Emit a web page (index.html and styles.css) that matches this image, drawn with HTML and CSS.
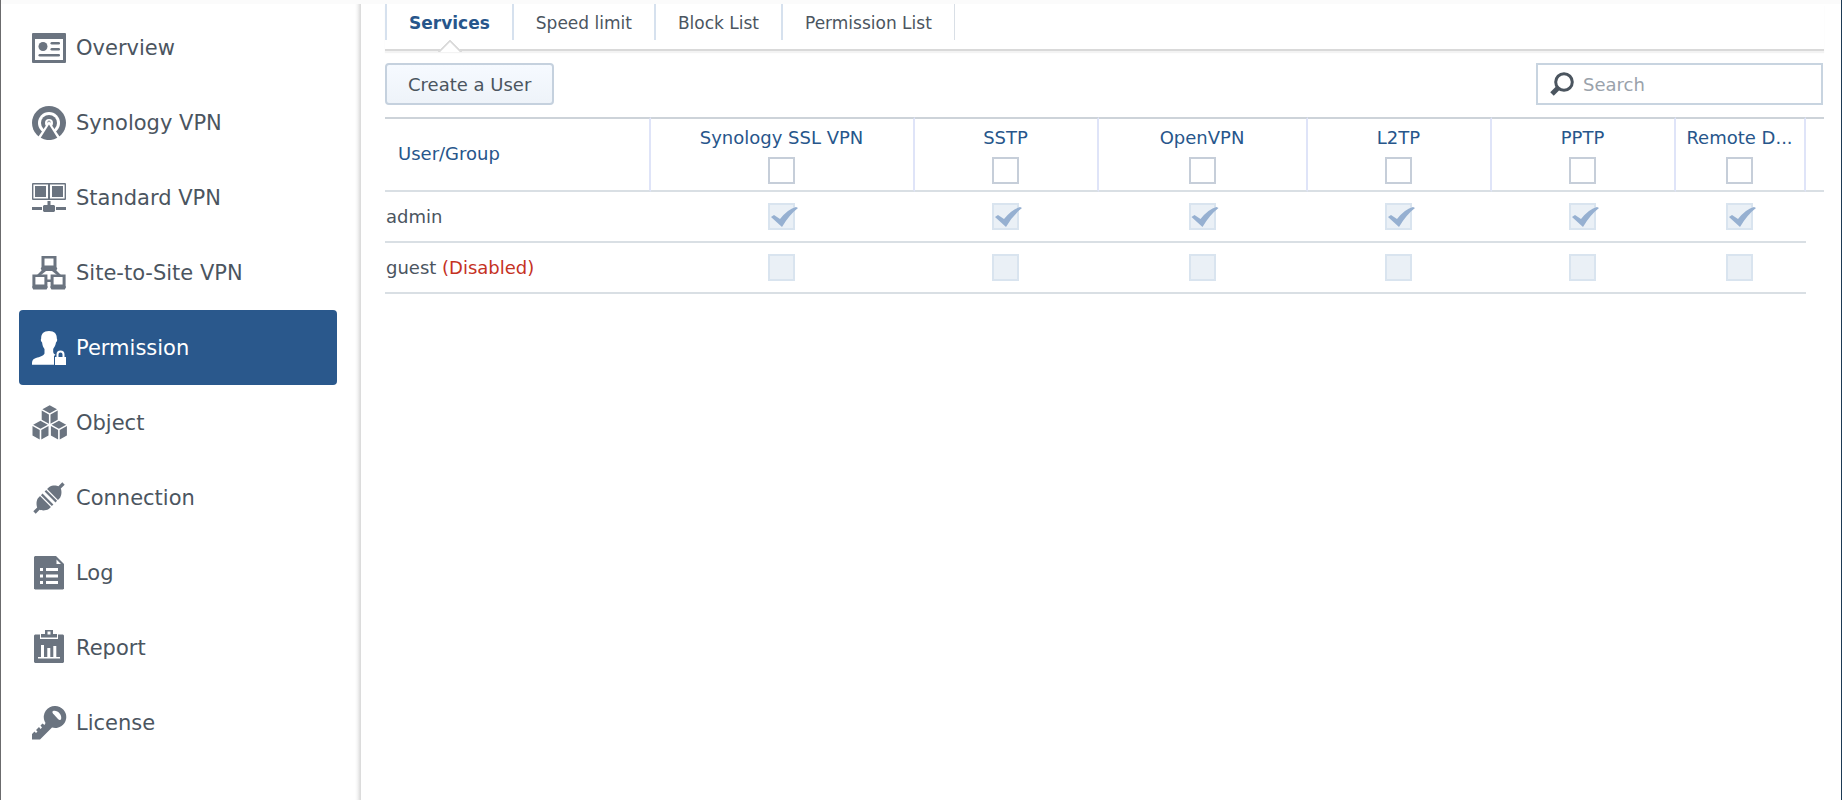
FILE: index.html
```html
<!DOCTYPE html>
<html lang="en">
<head>
  <meta charset="UTF-8">
  <title>VPN Plus Server</title>
  <link rel="stylesheet" href="styles.css">
</head>
<body>

  <nav class="sidebar">
    <a class="nav-item" href="#overview">
      <svg class="icon" viewBox="0 0 35 35">
        <path fill-rule="evenodd" d="M1 3h32a1 1 0 0 1 1 1v28a1 1 0 0 1-1 1H1a1 1 0 0 1-1-1V4a1 1 0 0 1 1-1zM3 9v21h28V9z"/>
        <circle cx="11" cy="16.500" r="4.500"/>
        <rect x="18.500" y="12" width="9.500" height="2.600" rx="1.300"/>
        <rect x="18.500" y="18" width="9.500" height="2.600" rx="1.300"/>
        <rect x="6.500" y="24" width="21.500" height="2.600" rx="1.300"/>
      </svg>
      <span>Overview</span>
    </a>
    <a class="nav-item" href="#synology-vpn">
      <svg class="icon" viewBox="0 0 35 35">
        <circle cx="17" cy="18" r="17"/>
        <circle class="cut" cx="17" cy="18" r="11"/>
        <circle cx="17" cy="18" r="8"/>
        <circle class="cut" cx="17" cy="18" r="4"/>
        <circle cx="17" cy="17" r="1.500"/>
        <path class="cut" d="M17 16 5.500 33l3 2h17l3-2z"/>
        <path d="M17 19.500 8.700 32.800a17 17 0 0 0 16.600 0z"/>
      </svg>
      <span>Synology VPN</span>
    </a>
    <a class="nav-item" href="#standard-vpn">
      <svg class="icon" viewBox="0 0 35 35">
        <path fill-rule="evenodd" d="M1 3h32a1 1 0 0 1 1 1v15a1 1 0 0 1-1 1H1a1 1 0 0 1-1-1V4a1 1 0 0 1 1-1zm.4 1.400v14.200h14.600V4.400zm16.600 0v14.200h14.600V4.400z"/>
        <path d="M3 6h11v11H3zM20 6h11v11H20z"/>
        <path d="M15.500 21h3v4H22l1 1v5l-1 1H12l-1-1v-5l1-1h3.500zM0 27h10v3H0zM24 27h10v3H24z"/>
      </svg>
      <span>Standard VPN</span>
    </a>
    <a class="nav-item" href="#site-to-site">
      <svg class="icon" viewBox="0 0 35 35">
        <path d="M11 14 5 20h4l5-4h6l5 4h4l-6-6zM14 24.500h6v2.500h-6z"/>
        <path fill-rule="evenodd" d="M9.500 1h15v11l.8 1.500-1.300 2.500H10l-1.300-2.500.8-1.500zM12.500 3.500v7h9v-7z"/>
        <path fill-rule="evenodd" d="M.4 19.500h15V31l.5 1-1.300 2.500H1.200L0 32l.4-1zM3.400 22v7.500h9V22z"/>
        <path fill-rule="evenodd" d="M18.600 19.500h15V31l.5 1-1.300 2.500H19.400L18.100 32l.5-1zM21.600 22v7.500h9V22z"/>
      </svg>
      <span>Site-to-Site VPN</span>
    </a>
    <a class="nav-item active" href="#permission">
      <svg class="icon" viewBox="0 0 35 35">
        <path d="M17 1c5.500 0 8 3 7.800 7.500.7.800.5 3-.8 4-.5 3.500-2 5-2.800 6.500v3c.3 1.500 1 2 2.300 2.800L22 26v8.700H0c0-4 .6-5.700 4-6.700 4-1.300 7-1.600 8.500-4.500v-4.500c-1.200-1.500-2-3-2.400-6.500-1.300-1-1.600-3.200-.9-4C9 4 11.500 1 17 1z"/>
        <path fill-rule="evenodd" d="M23 27h1.500v-2.500a4 4 0 0 1 8 0V27H34v8H23zm3.500 0h4v-2.500a2 2 0 0 0-4 0z"/>
      </svg>
      <span>Permission</span>
    </a>
    <a class="nav-item" href="#object">
      <svg class="icon" viewBox="0 0 35 35">
        <g id="cube">
          <path d="M17.700.2 25 4.200l-7.300 4-7.300-4z"/>
          <path d="M9.700 5.400l7.200 4v9.400l-7.200-4zM25.700 5.400l-7.200 4v9.400l7.200-4z"/>
        </g>
        <use href="#cube" x="-9.200" y="15.600"/>
        <use href="#cube" x="9.200" y="15.600"/>
      </svg>
      <span>Object</span>
    </a>
    <a class="nav-item" href="#connection">
      <svg class="icon" viewBox="0 0 35 35">
        <g transform="rotate(45 17 18)">
          <path d="M15.300-2.500h3.400V3c1.500.6 5 3 6 7v3H9.300v-3c1-4 4.500-6.400 6-7z"/>
          <path d="M9.300 14.300h15.400v2.200H9.300zM9.300 19.500h15.400v2.200H9.300z"/>
          <path d="M15.300 38.500h3.400V33c1.500-.6 5-3 6-7v-3H9.300v3c1 4 4.500 6.400 6 7z"/>
        </g>
      </svg>
      <span>Connection</span>
    </a>
    <a class="nav-item" href="#log">
      <svg class="icon" viewBox="0 0 35 35">
        <path d="M3 1h21l8 8v24.500l-1 1H3l-1-1V2z"/>
        <path class="cut" d="M24.500 4.500V9H29zM8 13h3v3H8zM14 13h12v3H14zM8 19.500h3v3H8zM14 19.500h12v3H14zM8 26h3v3H8zM14 26h12v3H14z"/>
      </svg>
      <span>Log</span>
    </a>
    <a class="nav-item" href="#report">
      <svg class="icon" viewBox="0 0 35 35">
        <path d="M2 5.500l1-1h5V9h18V4.500h5l1 1V32l-1 1H3l-1-1z"/>
        <path fill-rule="evenodd" d="M13 0h8v4h4v3.500H9V4h4zm2.500 1.500v3h3v-3z"/>
        <path class="cut" d="M6 27h3V15h3v12h3.300v-9h3v9h3v-11h3v11H28v1.500H6z"/>
      </svg>
      <span>Report</span>
    </a>
    <a class="nav-item" href="#license">
      <svg class="icon" viewBox="0 0 35 35">
        <path d="M23 1a11 11 0 1 1-3 21.500L8 34.500H0V29l2.500-2.500 1.500 1.500 1.500-1.500L4 25l3-3 1.500 2 1.500-1.500-1.500-2 2-2 2 1.500L13.500 18 12.500 16A11 11 0 0 1 23 1z"/>
        <path class="cut" d="M21 6c4-1.500 9.500 3.500 8 8.500-1 .8-2 .5-3-.5l-5-5.500c-.8-1-.8-2 0-2.500z"/>
      </svg>
      <span>License</span>
    </a>
  </nav>

  <main class="content">
    <div class="tabs">
      <a class="tab active" href="#services">Services</a>
      <a class="tab" href="#speed-limit">Speed limit</a>
      <a class="tab" href="#block-list">Block List</a>
      <a class="tab" href="#permission-list">Permission List</a>
    </div>

    <div class="toolbar">
      <button class="btn" type="button">Create a User</button>
      <label class="search">
        <svg class="search-icon" viewBox="0 0 24 24">
          <circle cx="14" cy="10" r="8.300"/>
          <path d="M8 16l-6 6"/>
        </svg>
        <input type="text" placeholder="Search" aria-label="Search">
      </label>
    </div>

    <table class="grid">
      <colgroup>
        <col>
        <col class="col-ssl">
        <col class="col-service">
        <col class="col-openvpn">
        <col class="col-service">
        <col class="col-service">
        <col class="col-remote">
        <col class="col-scroll">
      </colgroup>
      <thead>
        <tr>
          <th class="name">User/Group</th>
          <th><label>Synology SSL VPN<input type="checkbox"></label></th>
          <th><label>SSTP<input type="checkbox"></label></th>
          <th><label>OpenVPN<input type="checkbox"></label></th>
          <th><label>L2TP<input type="checkbox"></label></th>
          <th><label>PPTP<input type="checkbox"></label></th>
          <th><label>Remote D...<input type="checkbox"></label></th>
          <th></th>
        </tr>
      </thead>
      <tbody>
        <tr>
          <td class="name">admin</td>
          <td><input type="checkbox" aria-label="admin Synology SSL VPN" checked disabled></td>
          <td><input type="checkbox" aria-label="admin SSTP" checked disabled></td>
          <td><input type="checkbox" aria-label="admin OpenVPN" checked disabled></td>
          <td><input type="checkbox" aria-label="admin L2TP" checked disabled></td>
          <td><input type="checkbox" aria-label="admin PPTP" checked disabled></td>
          <td><input type="checkbox" aria-label="admin Remote Desktop" checked disabled></td>
        </tr>
        <tr>
          <td class="name">guest <span class="disabled">(Disabled)</span></td>
          <td><input type="checkbox" aria-label="guest Synology SSL VPN" disabled></td>
          <td><input type="checkbox" aria-label="guest SSTP" disabled></td>
          <td><input type="checkbox" aria-label="guest OpenVPN" disabled></td>
          <td><input type="checkbox" aria-label="guest L2TP" disabled></td>
          <td><input type="checkbox" aria-label="guest PPTP" disabled></td>
          <td><input type="checkbox" aria-label="guest Remote Desktop" disabled></td>
        </tr>
      </tbody>
    </table>
  </main>

</body>
</html>
```
FILE: styles.css
```css
* {
  box-sizing: border-box;
}

body {
  display: flex;
  min-height: 100vh;
  margin: 0;
  border-left: 1px solid #6b6b6d;
  border-right: 1px solid #1d3a55;
  background: linear-gradient(#fbfbfb 4px, #fff 4px);
  font-family: Verdana, "DejaVu Sans", sans-serif;
  font-size: 18px;
  color: #4b555f;
}

a {
  color: inherit;
  text-decoration: none;
}

/* sidebar */
.sidebar {
  flex: none;
  width: 360px;
  margin-top: 4px;
  padding: 6px 24px 0 18px;
  background: linear-gradient(to left, #dcdcdc 1px, #e8e8e8 2px, #f7f7f7 4px, #fff 6px);
}

.nav-item {
  display: flex;
  align-items: center;
  gap: 9px;
  height: 75px;
  padding-left: 13px;
  border-radius: 4px;
  font-size: 21px;
}

.nav-item.active {
  background: #2a588c;
  color: #fff;
}

.icon {
  width: 35px;
  height: 35px;
  fill: #6b7480;
}

.icon .cut {
  fill: #fff;
}

.active .icon {
  fill: #fff;
}

/* main area */
.content {
  flex: 1;
  min-width: 0;
  padding: 4px 17px 0 24px;
}

.tabs {
  display: flex;
  height: 47px;
  border-bottom: 2px solid #d9d9d9;
  box-shadow: 0 2px 1px #f3f3f3;
}

.tab {
  position: relative;
  height: 36px;
  padding: 0 22px;
  border-left: 2px solid #d6e1ee;
  font-size: 17px;
  line-height: 39px;
}

.tab:last-child {
  border-right: 1px solid #d9dfe6;
}

.tab.active {
  font-weight: bold;
  color: #27568b;
}

/* little pointer on the tab line */
.tab.active::after {
  content: '';
  position: absolute;
  top: 39px;
  left: 50%;
  width: 14px;
  height: 14px;
  margin-left: -8px;
  border: 2px solid #d9d9d9;
  background: #fff;
  clip-path: polygon(0 0, 100% 0, 0 100%);
  transform: rotate(45deg);
}

.toolbar {
  display: flex;
  justify-content: space-between;
  padding: 12px 1px 12px 0;
}

.btn {
  height: 42px;
  padding: 0 21px;
  border: 2px solid #c5d1de;
  border-radius: 4px;
  background: linear-gradient(#f6faff, #eef3f9);
  font-family: inherit;
  font-size: 18px;
  color: #4b555f;
}

.search {
  display: flex;
  align-items: center;
  gap: 9px;
  width: 287px;
  height: 42px;
  padding-left: 12px;
  border: 2px solid #c8d4e0;
}

.search-icon {
  flex: none;
  width: 24px;
  height: 24px;
  fill: none;
  stroke: #4b555f;
  stroke-width: 3;
}

.search-icon path {
  stroke-width: 5;
}

.search input {
  flex: 1;
  min-width: 0;
  padding: 0;
  border: 0;
  outline: none;
  background: none;
  font-family: inherit;
  font-size: 18px;
}

.search input::placeholder {
  color: #9aa2ab;
}

/* permission table */
.grid {
  width: 100%;
  table-layout: fixed;
  border-spacing: 0;
}

.col-ssl { width: 264px; }
.col-service { width: 184px; }
.col-openvpn { width: 209px; }
.col-remote { width: 130px; }
.col-scroll { width: 18px; }

.grid th {
  height: 75px;
  padding: 0 1px 0 0;
  border-top: 2px solid #cdd3d9;
  border-right: 2px solid #dfe4f8;
  border-bottom: 2px solid #d9dfe4;
  font-weight: normal;
  color: #27568b;
}

.grid th:last-child {
  border-right: 0;
}

.grid th.name {
  padding: 0 0 2px 13px;
  text-align: left;
}

.grid label {
  display: flex;
  flex-direction: column;
  align-items: center;
  gap: 6px;
  line-height: 26px;
}

.grid td {
  height: 51px;
  padding: 0 3px 0 0;
  border-bottom: 2px solid #d9dfe4;
  text-align: center;
}

.grid td.name {
  padding-left: 1px;
  text-align: left;
}

.disabled {
  color: #c5321f;
}

input[type="checkbox"] {
  position: relative;
  display: block;
  width: 27px;
  height: 27px;
  margin: 0 auto;
  border: 2px solid #c6ced9;
  background: #fff;
  appearance: none;
}

input[type="checkbox"]:disabled {
  border-color: #d9e4ef;
  background: #eaf0f6;
}

input[type="checkbox"]:checked::after {
  content: '';
  position: absolute;
  top: -2px;
  left: -2px;
  width: 32px;
  height: 27px;
  background: #96b0d1;
  clip-path: path('M3 14L6 12L12 16Q20 6 28 4L30 5Q21 12 14 24Z');
}
```
